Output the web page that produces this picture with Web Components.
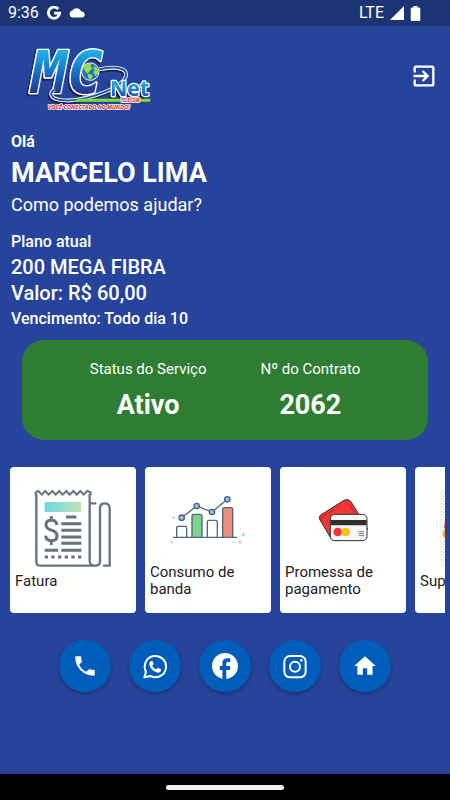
<!DOCTYPE html>
<html lang="pt-BR">
<head>
<meta charset="utf-8">
<meta name="viewport" content="width=device-width, initial-scale=1">
<title>MC Net Telecom</title>
<style>
  body {
    margin: 0;
    background-color: #26449b;
    color: #fff;
    font-family: Roboto, "Liberation Sans", sans-serif;
  }
</style>
</head>
<body>
<customer-area>
  <status-bar slot="top" time="9:36" network="LTE"></status-bar>
  <app-header></app-header>
  <plan-summary>
    <span slot="name">MARCELO LIMA</span>
    <span slot="plan">200 MEGA FIBRA</span>
    <span slot="price">R$ 60,00</span>
    <span slot="due">Todo dia 10</span>
  </plan-summary>
  <contract-status>
    <span slot="status">Ativo</span>
    <span slot="number">2062</span>
  </contract-status>
  <service-list>
    <service-card icon="invoice">Fatura</service-card>
    <service-card icon="usage">Consumo de banda</service-card>
    <service-card icon="promise">Promessa de pagamento</service-card>
    <service-card icon="support">Suporte</service-card>
  </service-list>
  <contact-bar></contact-bar>
  <gesture-bar slot="bottom"></gesture-bar>
</customer-area>

<script>
// Small helper: clone the markup in an open shadow root
const render = (element, html) => {
  const template = document.createElement('template')
  template.innerHTML = html
  element.attachShadow({ mode: 'open' })
  element.shadowRoot.appendChild(template.content.cloneNode(true))
}

// Page frame: status bar, scrolling content, gesture bar
class CustomerArea extends HTMLElement {
  constructor() {
    super()
    render(this, `
<style>
  :host {
    display: flex;
    flex-direction: column;
    min-height: 100vh;
  }

  main {
    flex: 1;
    min-width: 0;
  }
</style>
<slot name="top"></slot>
<main><slot></slot></main>
<slot name="bottom"></slot>
`)
  }
}

class StatusBar extends HTMLElement {
  constructor() {
    super()
    render(this, `
<style>
  :host {
    display: flex;
    align-items: center;
    justify-content: space-between;
    height: 26px;
    padding: 0 29px 0 8px;
    background-color: #1c3374;
    font-size: 16px;
    line-height: 28px;
  }

  div {
    display: flex;
    align-items: center;
    gap: 8px;
  }

  .right {
    gap: 6px;
  }

  svg {
    display: block;
    fill: #fff;
  }
</style>
<div>
  <span class="time"></span>
  <svg width="14" height="14" viewBox="0 0 14 14"><path d="M11.200 3A5.600 5.600 0 1 0 12.600 7.200H7.200" fill="none" stroke="#fff" stroke-width="2.800"/></svg>
  <svg width="17" height="14" viewBox="0 1 17 14"><path d="M4 12.500a3.600 3.600 0 0 1-.6-7.100A5 5 0 0 1 12.300 6.500a3 3 0 0 1 .9 6z"/></svg>
</div>
<div class="right">
  <span class="network"></span>
  <svg width="14" height="14" viewBox="0 0 14 14"><path d="M14 0v14H0z"/></svg>
  <svg width="11" height="15" viewBox="0 0 11 15"><path d="M3.500 0h4v1.500H9a1.300 1.300 0 0 1 1.300 1.300v10.900A1.300 1.300 0 0 1 9 15H2a1.300 1.300 0 0 1-1.300-1.300V2.800A1.300 1.300 0 0 1 2 1.500h1.500z"/></svg>
</div>
`)
    this.shadowRoot.querySelector('.time').textContent = this.getAttribute('time')
    this.shadowRoot.querySelector('.network').textContent = this.getAttribute('network')
  }
}

class BrandLogo extends HTMLElement {
  constructor() {
    super()
    render(this, `
<style>
  :host {
    display: block;
  }

  svg {
    display: block;
    overflow: visible;
  }

  text {
    paint-order: stroke;
    stroke: #fff;
    stroke-linejoin: round;
  }

  .initials {
    font: italic bold 178px "DejaVu Sans Mono", monospace;
    fill: url(#blue);
    stroke-width: 8px;
  }

  .net {
    font: bold 64px "Open Sans", sans-serif;
    fill: url(#sky);
    stroke-width: 7px;
  }

  .small {
    font: italic bold 13px "Open Sans", sans-serif;
    fill: #e3141c;
    stroke-width: 5px;
  }

  .tagline {
    font-size: 17px;
  }
</style>
<svg width="128" height="68" viewBox="21 6 384 204" role="img" aria-label="MC Net Telecom">
  <defs>
    <linearGradient id="blue" gradientUnits="userSpaceOnUse" x1="0" y1="30" x2="0" y2="165">
      <stop offset="0" stop-color="#1fb4ee"/>
      <stop offset=".55" stop-color="#1468c0"/>
      <stop offset="1" stop-color="#2a2f86"/>
    </linearGradient>
    <linearGradient id="sky" gradientUnits="userSpaceOnUse" x1="0" y1="120" x2="0" y2="170">
      <stop offset="0" stop-color="#27b5ec"/>
      <stop offset="1" stop-color="#1a55b0"/>
    </linearGradient>
    <filter id="shade" x="-10%" y="-10%" width="120%" height="130%">
      <feDropShadow dx="-4" dy="5" stdDeviation="2" flood-color="#0a1436" flood-opacity=".9"/>
    </filter>
  </defs>
  <g filter="url(#shade)">
    <text class="initials" x="34" y="160">MC</text>
    <path d="M238 88C300 74 336 90 310 122C282 154 178 188 122 180C92 176 86 160 104 148" fill="none" stroke="#fff" stroke-width="11"/>
    <path d="M238 88C300 74 336 90 310 122C282 154 178 188 122 180C92 176 86 160 104 148" fill="none" stroke="#1d58b4" stroke-width="6"/>
    <text class="net" x="270" y="168">Net</text>
  </g>
  <path d="M176 176H391V185H158z" fill="#7be02a"/>
  <text class="small" x="302" y="187">TELECOM</text>
  <text class="small tagline" x="84" y="207">VOCÊ CONECTADO AO MUNDO!</text>
  <circle cx="211" cy="95" r="26" fill="#1678c4" stroke="#fff" stroke-width="3"/>
  <path d="M190 84q10-16 24-12l-3 8 7 4-9 9-5 7-7-3-3-6zM203 101l11 2 4 7-8 9-6-8zM224 79l9 8 1 14-8 7-6-12 5-7-5-4z" fill="#9fe03c"/>
</svg>
`)
  }
}

class AppHeader extends HTMLElement {
  constructor() {
    super()
    render(this, `
<style>
  :host {
    display: flex;
    align-items: center;
    justify-content: space-between;
    padding: 16px 12px 0 27px;
  }

  button {
    display: block;
    padding: 0;
    border: 0;
    background: none;
    color: inherit;
    cursor: pointer;
  }

  svg {
    display: block;
    fill: currentColor;
  }
</style>
<brand-logo></brand-logo>
<button type="button" aria-label="Sair">
  <svg width="28" height="28" viewBox="0 0 24 24"><path d="M10.090 15.590L11.500 17l5-5-5-5-1.410 1.410L12.670 11H3v2h9.670l-2.580 2.590zM19 3H5c-1.110 0-2 .9-2 2v4h2V5h14v14H5v-4H3v4c0 1.100.89 2 2 2h14c1.100 0 2-.9 2-2V5c0-1.100-.9-2-2-2z"/></svg>
</button>
`)
  }
}

class PlanSummary extends HTMLElement {
  constructor() {
    super()
    render(this, `
<style>
  :host {
    display: block;
    padding: 22px 11px 0;
  }

  h1,
  h2,
  p {
    margin: 0;
    font-size: 16px;
    font-weight: 500;
    line-height: 20px;
  }

  .hello {
    font-weight: 700;
  }

  h1 {
    margin: 5px 0;
    font-size: 27px;
    font-weight: 700;
    line-height: 32px;
  }

  .question {
    margin-bottom: 16px;
    font-size: 18px;
    font-weight: 400;
    line-height: 22px;
  }

  h2,
  .price {
    font-size: 20px;
    line-height: 26px;
  }

  h2 {
    margin-top: 2px;
  }

  .due {
    margin-top: 3px;
  }
</style>
<p class="hello">Olá</p>
<h1><slot name="name"></slot></h1>
<p class="question">Como podemos ajudar?</p>
<p>Plano atual</p>
<h2><slot name="plan"></slot></h2>
<p class="price">Valor: <slot name="price"></slot></p>
<p class="due">Vencimento: <slot name="due"></slot></p>
`)
  }
}

class ContractStatus extends HTMLElement {
  constructor() {
    super()
    render(this, `
<style>
  :host {
    display: block;
    margin: 11px 22px 0;
    padding: 19px 0;
    border-radius: 22px;
    background-color: #2f7d32;
  }

  dl {
    display: flex;
    justify-content: center;
    gap: 54px;
    margin: 0;
    text-align: center;
  }

  dt {
    font-size: 15px;
    line-height: 20px;
  }

  dd {
    margin: 10px 0 0;
    font-size: 27px;
    font-weight: 700;
    line-height: 32px;
  }
</style>
<dl>
  <div>
    <dt>Status do Serviço</dt>
    <dd><slot name="status"></slot></dd>
  </div>
  <div>
    <dt>Nº do Contrato</dt>
    <dd><slot name="number"></slot></dd>
  </div>
</dl>
`)
  }
}

class ServiceList extends HTMLElement {
  constructor() {
    super()
    render(this, `
<style>
  :host {
    display: flex;
    gap: 9px;
    margin: 27px 5px 0 10px;
    overflow-x: auto;
    scrollbar-width: none;
  }
</style>
<slot></slot>
`)
  }
}

const cardIcons = {
  invoice: `
<svg viewBox="93 60 252 252" fill="none" stroke="#67737b" stroke-width="7">
  <defs>
    <linearGradient id="band"><stop stop-color="#6bd8e2"/><stop offset="1" stop-color="#c3e5b0"/></linearGradient>
  </defs>
  <path d="M109 102V305q0 12 12 12H285M269 102V302q0 15 16 15t15-15V144q0-14 14-14t15 14V317H309M269 130h20"/>
  <path d="M107 105V97l8-4 10 11 11-11 10 11 11-11 10 11 11-11 10 11 11-11 10 11 11-11 10 11 11-11 10 11 11-11 10 4v8" stroke-width="6"/>
  <path d="M134 126h110v30H134z" fill="url(#band)" stroke="none"/>
  <path d="M171 195q-2-14-17-14-16 0-16 13 0 11 15 16 18 5 18 17 0 15-17 15-16 0-17-15M154 168v13M154 242v13" stroke-width="9"/>
  <path d="M198 171h31M184 191h60M184 211h60M184 231h60M184 250h60M134 271h40M184 271h60" stroke-width="9"/>
  <path d="M134 291h110" stroke-width="9" stroke-dasharray="10 10"/>
</svg>`,
  usage: `
<svg viewBox="78 60 252 252" fill="#fff" stroke="#53657f" stroke-width="4">
  <path d="M110 231v-28q0-4 4-4h22q4 0 4 4v28M202 231v-45q0-5 5-5h20q5 0 5 5v45"/>
  <path d="M156 231v-63q0-5 5-5h20q5 0 5 5v63" fill="#79d487"/>
  <path d="M248 231v-83q0-5 5-5h20q5 0 5 5v83" fill="#ee8d7c"/>
  <path d="M99 232h192"/>
  <path d="M125 173l45-35 46 18 46-38" fill="none"/>
  <g fill="#91c3ec" stroke="#45618a" stroke-width="4">
    <circle cx="125" cy="173" r="8"/>
    <circle cx="170" cy="138" r="8"/>
    <circle cx="216" cy="156" r="8"/>
    <circle cx="262" cy="118" r="8"/>
  </g>
  <g fill="#ddd" stroke="#c2c2c2" stroke-width="2">
    <circle cx="101" cy="173" r="3"/>
    <circle cx="110" cy="157" r="1"/>
    <circle cx="95" cy="246" r="3"/>
    <circle cx="281" cy="246" r="2"/>
    <circle cx="300" cy="246" r="4"/>
    <circle cx="302" cy="206" r="1"/>
    <circle cx="310" cy="224" r="4" fill="#a9cdf2" stroke="#bcd9f5"/>
  </g>
</svg>`,
  promise: `
<svg viewBox="78 60 252 252" stroke="#303030" stroke-width="3">
  <path d="M137 165l70-44q13-7 21 4l50 82-86 35q-18 0-26-10l-31-52q-5-10 2-15z" fill="#f23535"/>
  <path d="M139 181q-2-7 4-11l36-22M224 134l17 27" fill="none" stroke="#8a2020" stroke-width="2"/>
  <rect x="166" y="163" width="110" height="79" rx="13" fill="#f7f7f7"/>
  <path d="M167 180h108v16H167z" fill="#303030" stroke="none"/>
  <circle cx="188" cy="216" r="13" fill="#f23535" stroke="none"/>
  <circle cx="212" cy="216" r="13" fill="#ffc107" stroke="none"/>
  <path d="M251 215h16M251 221h16M251 227h16" stroke="#777"/>
</svg>`,
  support: `
<svg viewBox="483 60 252 252">
  <defs>
    <pattern id="dots" width="12" height="12" patternUnits="userSpaceOnUse">
      <path d="M0 0h6v6H0zM6 6h6v6H6z" fill="#ececec"/>
    </pattern>
  </defs>
  <path d="M495 90h228v230H495z" fill="url(#dots)"/>
  <path d="M507 205q0-22 8-32h184q8 10 8 32z" fill="#ef6a5c"/>
  <ellipse cx="517" cy="221" rx="14" ry="16" fill="#f5a623"/>
</svg>`,
}

class ServiceCard extends HTMLElement {
  constructor() {
    super()
    render(this, `
<style>
  :host {
    display: block;
    flex: 0 0 126px;
  }

  button {
    display: flex;
    flex-direction: column;
    align-items: center;
    box-sizing: border-box;
    width: 100%;
    padding: 13px 5px 15px;
    border: 0;
    border-radius: 4px;
    background-color: #fff;
    color: #212121;
    font: inherit;
    font-size: 15px;
    line-height: 17px;
    text-align: left;
    cursor: pointer;
  }

  svg {
    display: block;
    width: 84px;
    height: 84px;
    overflow: visible;
  }

  span {
    display: flex;
    align-items: center;
    align-self: stretch;
    min-height: 34px;
  }
</style>
<button type="button">
  ${cardIcons[this.getAttribute('icon')]}
  <span><slot></slot></span>
</button>
`)
  }
}

const contactIcons = {
  phone: '<svg viewBox="0 0 24 24"><path d="M6.620 10.790c1.440 2.830 3.760 5.140 6.590 6.590l2.200-2.200c.27-.27.67-.36 1.020-.24 1.120.37 2.330.57 3.570.57.55 0 1 .45 1 1V20c0 .55-.45 1-1 1-9.390 0-17-7.610-17-17 0-.55.45-1 1-1h3.500c.55 0 1 .45 1 1 0 1.250.2 2.450.57 3.570.11.35.03.74-.25 1.020l-2.200 2.200z"/></svg>',
  whatsapp: `
<svg viewBox="276 72 78 78">
  <path d="M283 145l5-17A32 32 0 1 1 301 141z" fill="none" stroke="#fff" stroke-width="6" stroke-linejoin="round"/>
  <path d="M304 96c-4 1-7 5-6 10 2 12 13 23 26 25 5 0 9-3 9-7v-3l-9-5-5 5c-6-2-10-6-12-11l4-5-3-8z"/>
</svg>`,
  facebook: '<svg viewBox="2 2 20 20"><path d="M22 12c0-5.520-4.480-10-10-10S2 6.480 2 12c0 4.840 3.440 8.870 8 9.800V15H8v-3h2V9.500C10 7.570 11.570 6 13.500 6H16v3h-2c-.55 0-1 .45-1 1v2h3v3h-3v6.950c5.050-.5 9-4.760 9-9.950z"/></svg>',
  instagram: `
<svg viewBox="186 72 78 78">
  <rect x="193" y="81" width="64" height="64" rx="17" fill="none" stroke="#fff" stroke-width="6"/>
  <circle cx="225" cy="113" r="15" fill="none" stroke="#fff" stroke-width="6"/>
  <circle cx="244" cy="94" r="4"/>
</svg>`,
  home: '<svg viewBox="0 0 24 24"><path d="M10 20v-6h4v6h5v-8h3L12 3 2 12h3v8z"/></svg>',
}

class ContactLink extends HTMLElement {
  constructor() {
    super()
    render(this, `
<style>
  :host {
    display: block;
  }

  a {
    display: grid;
    place-items: center;
    width: 52px;
    height: 52px;
    border-radius: 50%;
    background-color: #005db9;
    box-shadow: 0 2px 4px rgba(0, 0, 0, 0.3);
  }

  svg {
    display: block;
    width: 26px;
    height: 26px;
    fill: #fff;
  }
</style>
<a href="#${this.getAttribute('icon')}" aria-label="${this.getAttribute('name')}">
  ${contactIcons[this.getAttribute('icon')]}
</a>
`)
  }
}

class ContactBar extends HTMLElement {
  constructor() {
    super()
    render(this, `
<style>
  :host {
    display: block;
    padding: 27px 0;
  }

  nav {
    display: flex;
    justify-content: center;
    gap: 18px;
  }
</style>
<nav>
  <contact-link icon="phone" name="Telefone"></contact-link>
  <contact-link icon="whatsapp" name="WhatsApp"></contact-link>
  <contact-link icon="facebook" name="Facebook"></contact-link>
  <contact-link icon="instagram" name="Instagram"></contact-link>
  <contact-link icon="home" name="Site"></contact-link>
</nav>
`)
  }
}

class GestureBar extends HTMLElement {
  constructor() {
    super()
    render(this, `
<style>
  :host {
    display: grid;
    place-items: center;
    height: 26px;
    background-color: #000;
  }

  div {
    width: 118px;
    height: 5px;
    border-radius: 3px;
    background-color: #f2f0ee;
  }
</style>
<div></div>
`)
  }
}

// Define the elements
customElements.define('status-bar', StatusBar)
customElements.define('brand-logo', BrandLogo)
customElements.define('app-header', AppHeader)
customElements.define('plan-summary', PlanSummary)
customElements.define('contract-status', ContractStatus)
customElements.define('service-card', ServiceCard)
customElements.define('service-list', ServiceList)
customElements.define('contact-link', ContactLink)
customElements.define('contact-bar', ContactBar)
customElements.define('gesture-bar', GestureBar)
customElements.define('customer-area', CustomerArea)
</script>
</body>
</html>
